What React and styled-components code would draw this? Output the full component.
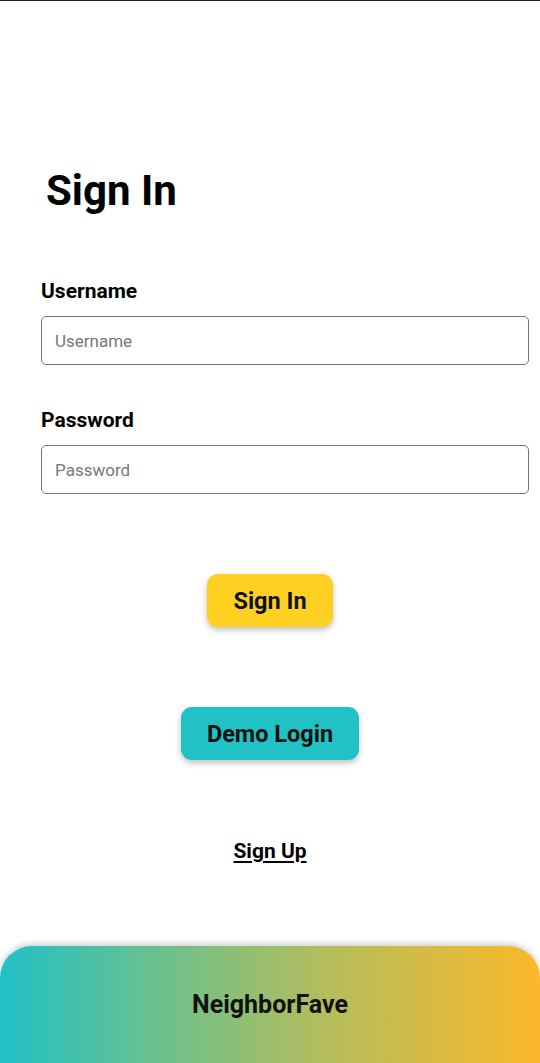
import React from "react";
import styled, { createGlobalStyle } from "styled-components";

const Global = createGlobalStyle`
  html, body { margin: 0; padding: 0; background: #fff; }
  body { font-family: Roboto, "Liberation Sans", sans-serif; color: #000; }
  * { box-sizing: border-box; }
`;

const Page = styled.div`
  min-height: 1063px;
  border-top: 1px solid #1f1f1f;
  display: flex;
  flex-direction: column;
`;

const Main = styled.main`
  flex: 1;
  display: flex;
  flex-direction: column;
  padding: 165px 11px 0 41px;
`;

const Title = styled.h1`
  margin: 0 0 0 5px;
  font-size: 42px;
  line-height: 50px;
  font-weight: 700;
`;

const Form = styled.form`
  display: flex;
  flex-direction: column;
  margin-top: 63px;
`;

const Field = styled.div`
  display: flex;
  flex-direction: column;
  gap: 13px;
  & + & { margin-top: 43px; }
`;

const Label = styled.label`
  font-size: 21px;
  line-height: 24px;
  font-weight: 700;
`;

const Input = styled.input`
  width: 100%;
  height: 49px;
  border: 1px solid #767676;
  border-radius: 5px;
  padding: 0 13px;
  font-family: Roboto, "Liberation Sans", sans-serif;
  font-size: 17px;
  color: #000;
  outline: none;
  &::placeholder { color: #777; }
`;

const Actions = styled.div`
  display: flex;
  flex-direction: column;
  align-items: center;
  margin-left: -41px;
  margin-right: -11px;
  margin-top: 80px;
`;

const Button = styled.button`
  height: 53px;
  padding: 0 ${(p) => p.$px}px;
  border: none;
  border-radius: 11px;
  background: ${(p) => p.$bg};
  box-shadow: 0 3px 6px rgba(0, 0, 0, 0.25);
  font-family: Roboto, "Liberation Sans", sans-serif;
  font-size: 23.5px;
  font-weight: 700;
  color: #111;
  cursor: pointer;
  & + & { margin-top: 80px; }
`;

const SignUp = styled.a`
  margin-top: 78px;
  font-size: 21px;
  line-height: 26px;
  font-weight: 700;
  color: #000;
  text-decoration: underline;
  text-underline-offset: 3px;
`;

const Footer = styled.footer`
  margin-top: 81px;
  height: 117px;
  border-radius: 32px 32px 0 0;
  background: linear-gradient(90deg, #20c1c7 0%, #6dc08c 30%, #b4bd5d 60%, #fbb929 100%);
  box-shadow: 0 -2px 6px rgba(0, 0, 0, 0.2);
  display: flex;
  justify-content: center;
  padding-top: 44px;
  font-size: 25px;
  font-weight: 700;
  line-height: 30px;
  color: #111;
`;

export default function App() {
  return (
    <>
      <Global />
      <Page>
        <Main>
          <Title>Sign In</Title>
          <Form onSubmit={(e) => e.preventDefault()}>
            <Field>
              <Label htmlFor="u">Username</Label>
              <Input id="u" placeholder="Username" />
            </Field>
            <Field>
              <Label htmlFor="p">Password</Label>
              <Input id="p" type="password" placeholder="Password" />
            </Field>
          </Form>
          <Actions>
            <Button $bg="#fdd022" $px={26}>Sign In</Button>
            <Button $bg="#21c2c5" $px={26}>Demo Login</Button>
            <SignUp href="#">Sign Up</SignUp>
          </Actions>
        </Main>
        <Footer>NeighborFave</Footer>
      </Page>
    </>
  );
}
